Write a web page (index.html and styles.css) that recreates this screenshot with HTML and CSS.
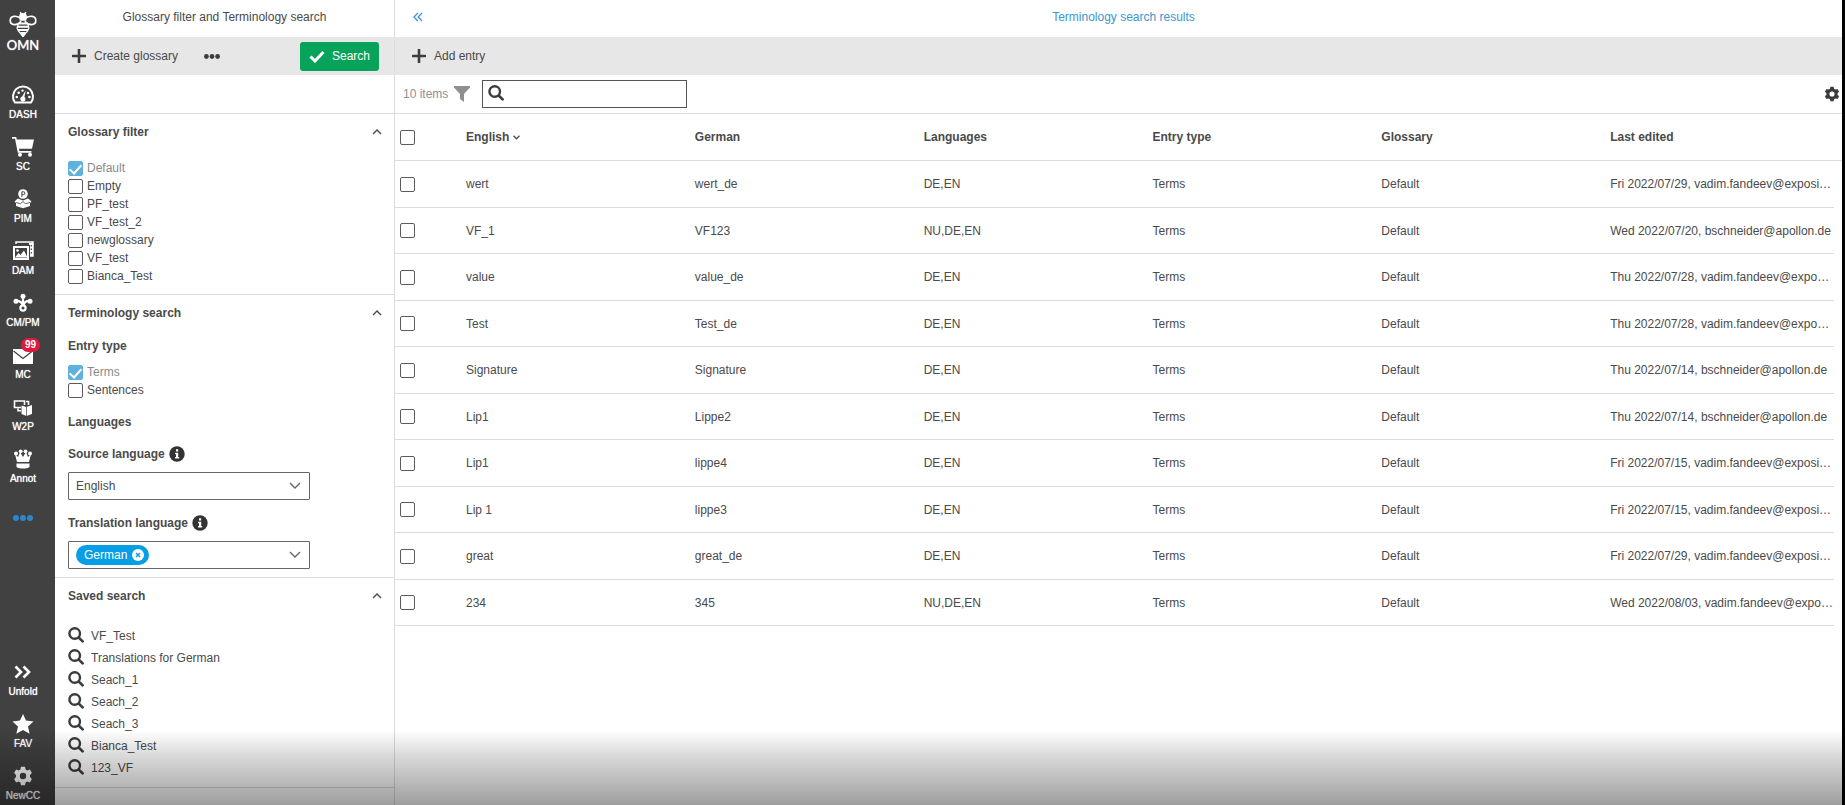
FILE: index.html
```html
<!DOCTYPE html>
<html lang="en">
<head>
<meta charset="utf-8">
<title>Terminology search</title>
<link rel="stylesheet" href="styles.css">
</head>
<body>
<svg class="defs" aria-hidden="true">
  <symbol id="search" viewBox="0 0 16 16"><circle cx="6.700" cy="6.500" r="5.300" fill="none" stroke="currentColor" stroke-width="2.400"/><path d="M10.800 10.600 14.600 14.400" stroke="currentColor" stroke-width="2.700" stroke-linecap="round"/></symbol>
  <symbol id="plus" viewBox="0 0 14 14"><path d="M7 .8v12.4M.8 7h12.4" stroke="currentColor" stroke-width="2.6" stroke-linecap="round"/></symbol>
  <symbol id="dots" viewBox="0 0 20 6"><circle cx="3" cy="3" r="3"/><circle cx="10" cy="3" r="3"/><circle cx="17" cy="3" r="3"/></symbol>
  <symbol id="up" viewBox="0 0 10 6"><path d="M1 5 5 1l4 4" fill="none" stroke="currentColor" stroke-width="1.4"/></symbol>
  <symbol id="info" viewBox="0 0 16 16"><circle cx="8" cy="8" r="7.7"/><path d="M6 6.7h3.2v4.4h1v1.5H6v-1.5h1V8.2H6zM7 3.2h2.2v2.2H7z" fill="#fff"/></symbol>
  <symbol id="gear" viewBox="0 0 20 20"><path fill-rule="evenodd" d="M8 .8h4l.6 2.6 1.8 1 2.5-.8 2 3.500-1.900 1.800v2.200l1.900 1.800-2 3.500-2.500-.8-1.800 1-.6 2.600H8l-.6-2.600-1.800-1-2.500.8-2-3.500L3 11.100V8.900L1.100 7.100l2-3.500 2.500.8 1.800-1zM10 6.800a3.200 3.200 0 1 0 0 6.400 3.200 3.200 0 0 0 0-6.400z"/></symbol>
</svg>

<div class="app">
  <nav class="rail">
    <a class="brand" href="#">
      <svg class="line" width="28" height="26" viewBox="0 0 28 26" stroke="currentColor" stroke-width="1.700"><path d="M12.600 8.300C8 3.500 1.200 4.800 1.200 9.400c0 5.200 7.200 5.600 11 .8M15.400 8.300C20 3.500 26.800 4.800 26.800 9.400c0 5.200-7.200 5.600-11 .8"/><path d="M11.200 1.200 13 4M16.800 1.200 15 4" stroke-width="1.400"/><path d="M11 5.500C11 2 17 2 17 5.500L16.500 9h-5z" fill="currentColor"/><path d="M9.600 12.500h8.800M8.200 15.700h11.600M9 19h10M11.300 22h5.400" stroke-width="1.900"/><path d="M9.500 12.500 8 17l1.500 3.200L14 25l4.500-4.800L20 17l-1.500-4.500" stroke-width="1.200"/><path d="M12.500 23h3L14 25.500z" fill="currentColor"/></svg>
      <span>OMN</span>
    </a>
    <a href="#"><svg width="24" height="20" viewBox="0 0 24 20"><path d="M4 17.500A10 10 0 1 1 20 17.500z" fill="none" stroke="currentColor" stroke-width="2"/><path d="M14.800 5.200 13.400 12a2.600 2.600 0 1 1-2.300-.4z"/><circle cx="5.800" cy="12" r="1.300"/><circle cx="7.700" cy="7.700" r="1.300"/><circle cx="11.500" cy="5.600" r="1.200"/><circle cx="17" cy="8" r="1.300"/><circle cx="18.400" cy="12" r="1.300"/></svg><span>DASH</span></a>
    <a href="#"><svg width="24" height="20" viewBox="0 0 24 20"><path d="M1 0h4.200l.6 2.500H23l-2 9.300H8l.4 2.200h12v1.700H6.800L4 1.800H1z"/><circle cx="9" cy="17.800" r="2"/><circle cx="19" cy="17.800" r="2"/></svg><span>SC</span></a>
    <a href="#"><svg width="24" height="20" viewBox="0 0 24 20"><circle cx="12" cy="5" r="4.800"/><path d="M10.900 7.800V2.800h1.600a1.400 1.400 0 0 1 0 2.800h-1.600" fill="none" stroke="#414141" stroke-width="1"/><path d="m5 11 2-1.500 5 2 5-2 2 1.500 1.500 2-1.500.8V17l-7 2.200L5 17v-3.200l-1.500-.8z"/><path d="m5 13.500 4.500 1.200L12 12.500l2.500 2.200 4.500-1.200" fill="none" stroke="#414141" stroke-width=".8"/></svg><span>PIM</span></a>
    <a href="#"><svg width="24" height="20" viewBox="0 0 24 20"><path d="M5 3V1h17v14h-3" fill="none" stroke="currentColor" stroke-width="1.500"/><path d="M18 2h4v13h-3V4h-1z"/><path fill-rule="evenodd" d="M2 5h16v14H2zM4 7v10h12V7z"/><path d="M4 16.500 7.500 12l2 2 3.500-4.500 3.500 7z"/><circle cx="6.500" cy="9.500" r="1.300"/><path d="M20.300 4v1.500M20.300 7.500V9M20.300 11v1.500" stroke="#414141" stroke-width="1.200"/></svg><span>DAM</span></a>
    <a href="#"><svg width="24" height="20" viewBox="0 0 24 20"><path d="M12 3v10M4.500 8c4-.5 6.500 1.500 7.500 5M12 13c1-3.500 3.500-5.500 7.500-5" fill="none" stroke="currentColor" stroke-width="2.200"/><circle cx="12" cy="3.300" r="2.500"/><circle cx="5" cy="8.200" r="2.500"/><circle cx="19" cy="8.200" r="2.500"/><circle cx="12" cy="15" r="2.600" fill="#414141" stroke="currentColor" stroke-width="2.200"/></svg><span>CM/PM</span></a>
    <a href="#"><svg width="24" height="20" viewBox="0 0 24 20"><path d="M2 4h20v15H2z"/><path d="m2.500 6 9.500 7.500L21.500 6" fill="none" stroke="#414141" stroke-width="1.300"/></svg><b class="badge">99</b><span>MC</span></a>
    <a href="#"><svg width="24" height="20" viewBox="0 0 24 20"><path d="M10 10.500H3.500V4h10v4M7 11.500v2.200h3M15 4.500h2.500V8" fill="none" stroke="currentColor" stroke-width="1.600"/><path d="m10.500 8.500 5 1.500 5.500-2v9l-5.500 2-5-2z"/><path d="M15.500 10v9" stroke="#414141" stroke-width=".7"/></svg><span>W2P</span></a>
    <a href="#"><svg width="24" height="20" viewBox="0 0 24 20"><circle cx="5" cy="4.500" r="2"/><circle cx="9.700" cy="2.300" r="1.900"/><circle cx="14.500" cy="2.300" r="1.900"/><circle cx="19" cy="4.500" r="2"/><path d="m4 5 3 3 2-5 3 5 3-5 2 5 3-3-2 8H6zM5.500 14.500h13V18c-3 2-10 2-13 0z"/></svg><span>Annot</span></a>
    <button class="more" aria-label="More"><svg width="20" height="6"><use href="#dots"/></svg></button>
    <a class="unfold" href="#"><svg width="24" height="20" viewBox="0 0 24 20"><path d="m4.500 4.500 5.500 5.500-5.500 5.500M12.500 4.500 18 10l-5.500 5.500" fill="none" stroke="currentColor" stroke-width="2.600"/></svg><span>Unfold</span></a>
    <a href="#"><svg width="24" height="20" viewBox="0 0 24 20"><path d="m12 0 3 6.600 7.500.8-5.500 5 1.600 7.400-6.600-3.800-6.600 3.800L7 12.400l-5.500-5L9 6.600z"/></svg><span>FAV</span></a>
    <a href="#"><svg width="20" height="20"><use href="#gear"/></svg><span>NewCC</span></a>
  </nav>

  <aside class="side">
    <h1 class="title">Glossary filter and Terminology search</h1>
    <div class="bar">
      <button class="tool"><svg width="14" height="14"><use href="#plus"/></svg>Create glossary</button>
      <button class="tool" aria-label="More actions"><svg width="16" height="5"><use href="#dots"/></svg></button>
      <button class="go"><svg width="16" height="13" viewBox="0 0 16 13"><path d="m1.500 6.500 4.500 4.500L14.500 2" fill="none" stroke="currentColor" stroke-width="3"/></svg>Search</button>
    </div>
    <div class="spacer"></div>

    <section class="group">
      <h2>Glossary filter<button class="fold" aria-label="Collapse"><svg width="10" height="6"><use href="#up"/></svg></button></h2>
      <div class="checks first">
        <label class="off"><input type="checkbox" checked disabled>Default</label>
        <label><input type="checkbox">Empty</label>
        <label><input type="checkbox">PF_test</label>
        <label><input type="checkbox">VF_test_2</label>
        <label><input type="checkbox">newglossary</label>
        <label><input type="checkbox">VF_test</label>
        <label><input type="checkbox">Bianca_Test</label>
      </div>
    </section>

    <section class="group">
      <h2>Terminology search<button class="fold" aria-label="Collapse"><svg width="10" height="6"><use href="#up"/></svg></button></h2>
      <h3 class="type">Entry type</h3>
      <div class="checks">
        <label class="off"><input type="checkbox" checked disabled>Terms</label>
        <label><input type="checkbox">Sentences</label>
      </div>
      <h3 class="langs">Languages</h3>
      <label class="field" for="source">Source language <svg width="16" height="16"><use href="#info"/></svg></label>
      <select id="source" class="box"><option>English</option></select>
      <label class="field second" for="target">Translation language <svg width="16" height="16"><use href="#info"/></svg></label>
      <button id="target" class="box multi"><span class="chip">German <svg width="12" height="12" viewBox="0 0 12 12"><circle cx="6" cy="6" r="6" fill="#fff"/><path d="m4 4 4 4M8 4 4 8" stroke="#079ee6" stroke-width="1.500"/></svg></span></button>
    </section>

    <section class="group">
      <h2>Saved search<button class="fold" aria-label="Collapse"><svg width="10" height="6"><use href="#up"/></svg></button></h2>
      <div class="saved">
        <a href="#"><svg width="16" height="16"><use href="#search"/></svg>VF_Test</a>
        <a href="#"><svg width="16" height="16"><use href="#search"/></svg>Translations for German</a>
        <a href="#"><svg width="16" height="16"><use href="#search"/></svg>Seach_1</a>
        <a href="#"><svg width="16" height="16"><use href="#search"/></svg>Seach_2</a>
        <a href="#"><svg width="16" height="16"><use href="#search"/></svg>Seach_3</a>
        <a href="#"><svg width="16" height="16"><use href="#search"/></svg>Bianca_Test</a>
        <a href="#"><svg width="16" height="16"><use href="#search"/></svg>123_VF</a>
      </div>
    </section>
  </aside>

  <main class="main">
    <header class="title results">
      <button class="back" aria-label="Collapse panel"><svg width="10" height="10" viewBox="0 0 10 10"><path d="M4.800 1 1 5l3.800 4M9 1 5.200 5 9 9" fill="none" stroke="currentColor" stroke-width="1.300"/></svg></button>
      <h1>Terminology search results</h1>
    </header>
    <div class="bar"><button class="tool"><svg width="14" height="14"><use href="#plus"/></svg>Add entry</button></div>
    <div class="filter">
      <span>10 items</span>
      <svg class="funnel" width="16" height="16" viewBox="0 0 16 16"><path d="M0 0h16v1.500L10 8v8l-4-3V8L0 1.500z"/></svg>
      <label class="find"><svg width="16" height="16"><use href="#search"/></svg><input type="text" aria-label="Search entries"></label>
      <button class="settings" aria-label="Settings"><svg width="16" height="16"><use href="#gear"/></svg></button>
    </div>
    <table>
      <colgroup><col class="pick"><col><col><col><col><col><col><col class="edge"></colgroup>
      <thead><tr><th><input type="checkbox" aria-label="Select all"></th><th>English <svg width="7" height="5" viewBox="0 0 7 5"><path d="m.5.8 3 3 3-3" fill="none" stroke="currentColor" stroke-width="1.300"/></svg></th><th>German</th><th>Languages</th><th>Entry type</th><th>Glossary</th><th>Last edited</th><th></th></tr></thead>
      <tbody>
        <tr><td><input type="checkbox" aria-label="Select wert"></td><td>wert</td><td>wert_de</td><td>DE,EN</td><td>Terms</td><td>Default</td><td>Fri 2022/07/29, vadim.fandeev@exposi…</td></tr>
        <tr><td><input type="checkbox" aria-label="Select VF_1"></td><td>VF_1</td><td>VF123</td><td>NU,DE,EN</td><td>Terms</td><td>Default</td><td>Wed 2022/07/20, bschneider@apollon.de</td></tr>
        <tr><td><input type="checkbox" aria-label="Select value"></td><td>value</td><td>value_de</td><td>DE,EN</td><td>Terms</td><td>Default</td><td>Thu 2022/07/28, vadim.fandeev@expo…</td></tr>
        <tr><td><input type="checkbox" aria-label="Select Test"></td><td>Test</td><td>Test_de</td><td>DE,EN</td><td>Terms</td><td>Default</td><td>Thu 2022/07/28, vadim.fandeev@expo…</td></tr>
        <tr><td><input type="checkbox" aria-label="Select Signature"></td><td>Signature</td><td>Signature</td><td>DE,EN</td><td>Terms</td><td>Default</td><td>Thu 2022/07/14, bschneider@apollon.de</td></tr>
        <tr><td><input type="checkbox" aria-label="Select Lip1"></td><td>Lip1</td><td>Lippe2</td><td>DE,EN</td><td>Terms</td><td>Default</td><td>Thu 2022/07/14, bschneider@apollon.de</td></tr>
        <tr><td><input type="checkbox" aria-label="Select Lip1"></td><td>Lip1</td><td>lippe4</td><td>DE,EN</td><td>Terms</td><td>Default</td><td>Fri 2022/07/15, vadim.fandeev@exposi…</td></tr>
        <tr><td><input type="checkbox" aria-label="Select Lip 1"></td><td>Lip 1</td><td>lippe3</td><td>DE,EN</td><td>Terms</td><td>Default</td><td>Fri 2022/07/15, vadim.fandeev@exposi…</td></tr>
        <tr><td><input type="checkbox" aria-label="Select great"></td><td>great</td><td>great_de</td><td>DE,EN</td><td>Terms</td><td>Default</td><td>Fri 2022/07/29, vadim.fandeev@exposi…</td></tr>
        <tr><td><input type="checkbox" aria-label="Select 234"></td><td>234</td><td>345</td><td>NU,DE,EN</td><td>Terms</td><td>Default</td><td>Wed 2022/08/03, vadim.fandeev@expo…</td></tr>
      </tbody>
    </table>
  </main>
</div>
<div class="shade"></div>
</body>
</html>
```
FILE: styles.css
```css
* { box-sizing: border-box; }
body { margin: 0; background: #fff; color: #4a4a4a; font: 12px/16px "Liberation Sans", Arial, sans-serif; }
h1, h2, h3 { margin: 0; font-size: 12px; line-height: 16px; }
button { padding: 0; border: 0; background: none; color: inherit; font: inherit; }
a { color: inherit; text-decoration: none; }
svg { display: block; flex: none; fill: currentColor; }
svg.line { fill: none; }
.defs { position: absolute; width: 0; height: 0; }

.app { display: flex; height: 100vh; overflow: hidden; border-right: 3px solid #000; }

.rail { display: flex; flex: none; flex-direction: column; align-items: center; gap: 15px; width: 55px; padding: 11px 9px 2px 0; background: #414141; color: #fff; }
.rail a { position: relative; display: flex; flex: none; flex-direction: column; align-items: center; gap: 3px; height: 37px; font-size: 10px; line-height: 14px; text-shadow: 0 0 1px #fff; }
.rail a.brand { gap: 0; height: 59px; font: 13px/16px "Lato", sans-serif; }
.rail .badge { position: absolute; top: -7px; left: 10px; padding: 0 4px; border-radius: 7px; background: #e0193f; font-size: 10px; line-height: 14px; text-shadow: none; }
.more { height: 34px; color: #2c86c8; }
.rail a.unfold { margin-top: auto; }

.side { flex: none; width: 340px; border-right: 1px solid #dcdcdc; }
.title { height: 37px; padding-top: 9px; font-weight: 400; text-align: center; }
.bar { display: flex; align-items: center; height: 38px; padding: 0 15px 0 17px; background: #e7e7e7; gap: 26px; }
.tool { display: flex; align-items: center; gap: 8px; }
.main .bar { padding-left: 16px; }
.tool svg { color: #3c3c3c; }
.go { display: flex; align-items: center; gap: 7px; height: 29px; margin-left: auto; padding: 0 9px; border-radius: 3px; background: #08a35a; color: #fff; }
.spacer { height: 39px; border-bottom: 1px solid #dcdcdc; }

.group { padding: 10px 12px 0 13px; border-bottom: 1px solid #dcdcdc; }
.group h2 { display: flex; justify-content: space-between; }
.checks { display: grid; grid-auto-rows: 18px; }
.checks.first { padding: 19px 0 9px; }
.checks label { display: flex; align-items: center; gap: 4px; }
.checks .off { color: #8a8a8a; }
input[type="checkbox"] { appearance: none; display: block; flex: none; width: 15px; height: 15px; margin: 0; border: 1px solid #5c5c5c; border-radius: 2px; background: #fff; }
input[type="checkbox"]:checked { border-color: #5fb2dd; background: #5fb2dd; }
input[type="checkbox"]:checked::after { content: ""; display: block; width: 5px; height: 10px; margin: 0 auto; border: solid #fff; border-width: 0 2px 2px 0; transform: rotate(42deg); }
.group h3.type { padding: 17px 0 9px; }
.group h3.langs { padding: 15px 0 16px; }
.field { display: flex; align-items: center; gap: 4px; font-weight: 700; padding-bottom: 10px; }
.field.second { padding-top: 15px; }
.field svg { color: #333; }
.box { appearance: none; display: flex; align-items: center; width: 242px; height: 28px; padding: 0 7px; border: 1px solid #666; border-radius: 1px; color: inherit; font: inherit; background: #fff url("data:image/svg+xml,%3Csvg xmlns='http://www.w3.org/2000/svg' width='12' height='8'%3E%3Cpath d='m1 1 5 5 5-5' fill='none' stroke='%23666' stroke-width='1.400'/%3E%3C/svg%3E") no-repeat right 8px center; }
.box.multi { margin-bottom: 8px; }
.chip { display: flex; align-items: center; gap: 5px; padding: 2px 5px 2px 8px; border-radius: 10px; background: #079ee6; color: #fff; }
.saved { display: grid; grid-auto-rows: 22px; padding: 21px 0 8px; }
.saved a { display: flex; align-items: center; gap: 7px; }
.saved svg, .find svg { margin-bottom: 3px; color: #3c3c3c; }

.main { flex: 1; min-width: 0; }
.results { display: flex; color: #3b97d0; }
.results h1 { flex: 1; margin-right: 18px; font-weight: 400; }
.back { display: flex; align-items: center; width: 10px; height: 16px; margin-left: 18px; color: #3b97d0; }
.main .bar { padding-left: 17px; }
.filter { display: flex; align-items: center; height: 39px; padding-left: 8px; border-bottom: 1px solid #dcdcdc; color: #8f8f8f; }
.funnel { margin: 0 12px 0 6px; }
.find { display: flex; align-items: center; width: 205px; height: 28px; padding: 0 5px; border: 1px solid #555; }
.find input { flex: 1; min-width: 0; padding: 0 6px; border: 0; outline: 0; font: inherit; }
.settings { margin-left: auto; padding-right: 2px; color: #3c3c3c; }

table { width: 100%; table-layout: fixed; border-collapse: separate; border-spacing: 0; }
.pick { width: 66px; }
.edge { width: 8px; }
th, td { height: 47px; padding: 0 0 0 5px; border-bottom: 1px solid #dcdcdc; text-align: left; white-space: nowrap; }
tbody tr:nth-child(even) td { height: 46px; }
th svg { display: inline-block; vertical-align: middle; }

.shade { position: fixed; inset: auto 3px 0 0; height: 75px; pointer-events: none; background: linear-gradient(rgba(0, 0, 0, 0), rgba(0, 0, 0, .14) 33%, rgba(0, 0, 0, .38)); }
```
